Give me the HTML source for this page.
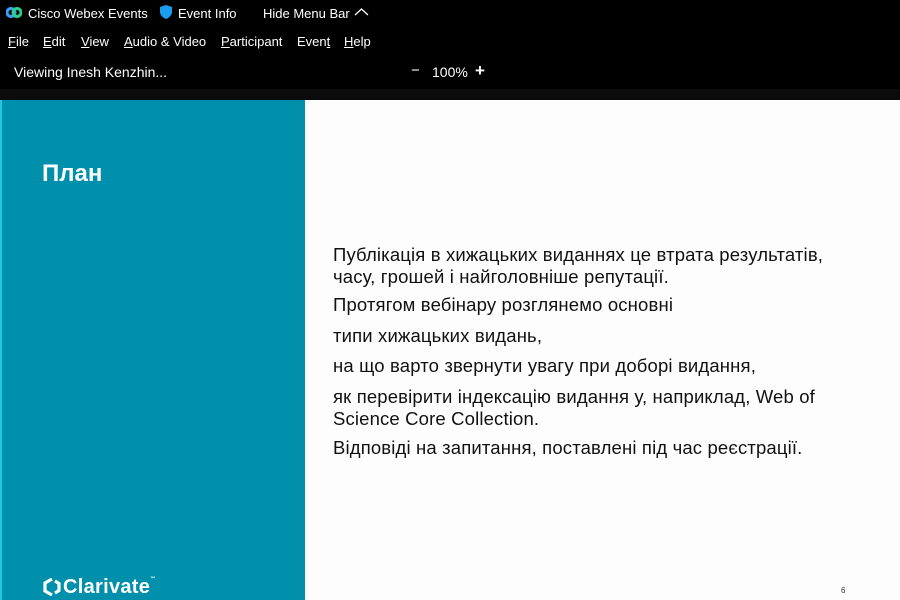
<!DOCTYPE html>
<html><head><meta charset="utf-8"><style>
body{margin:0;width:900px;height:600px;overflow:hidden;background:#000;font-family:"Liberation Sans","DejaVu Sans",sans-serif;position:relative}
.t{position:absolute;color:#fff;font-size:13px;white-space:nowrap}
.m{position:absolute;top:34px;color:#fff;font-size:13px}
.m u{text-decoration:underline}
#left{position:absolute;left:0;top:100px;width:305px;height:500px;background:#0090ab;border-left:2px solid #20c8e0;box-sizing:border-box}
#right{position:absolute;left:305px;top:100px;width:595px;height:500px;background:#fdfdfd}
.p{position:absolute;left:333px;color:#111;font-size:18.5px;line-height:22px;white-space:nowrap;letter-spacing:0.15px}
</style></head><body>
<svg style="position:absolute;left:6px;top:6px" width="16" height="13" viewBox="0 0 16 13"><circle cx="5" cy="6.5" r="4" fill="none" stroke="#3aa0ff" stroke-width="3"/><circle cx="11" cy="6.5" r="4" fill="none" stroke="#2ad08a" stroke-width="3"/></svg>
<div class="t" style="left:28px;top:6px">Cisco Webex Events</div>
<svg style="position:absolute;left:160px;top:5px" width="12" height="14" viewBox="0 0 12 14"><path d="M6 0L12 2V7C12 10 9 13 6 14C3 13 0 10 0 7V2Z" fill="#1a9cf0"/></svg>
<div class="t" style="left:178px;top:6px">Event Info</div>
<div class="t" style="left:263px;top:6px">Hide Menu Bar</div>
<svg style="position:absolute;left:354px;top:7px" width="15" height="10"><path d="M1 8L7.5 2L14 8" stroke="#fff" fill="none" stroke-width="1.3"/></svg>
<div class="m" style="left:8px"><u>F</u>ile</div>
<div class="m" style="left:43px"><u>E</u>dit</div>
<div class="m" style="left:81px"><u>V</u>iew</div>
<div class="m" style="left:124px"><u>A</u>udio &amp; Video</div>
<div class="m" style="left:221px"><u>P</u>articipant</div>
<div class="m" style="left:297px">Even<u>t</u></div>
<div class="m" style="left:344px"><u>H</u>elp</div>
<div class="t" style="left:14px;top:64px;font-size:14px">Viewing Inesh Kenzhin...</div>
<div class="t" style="left:411px;top:62px;font-size:15px">−</div>
<div class="t" style="left:432px;top:64px;font-size:14px">100%</div>
<div class="t" style="left:475px;top:63px;font-size:17px;font-weight:bold;line-height:16px">+</div>
<div style="position:absolute;left:0;top:89px;width:900px;height:11px;background:#0b0b0b"></div>
<div id="left">
<div style="position:absolute;left:40px;top:60px;color:#fff;font-size:24px;font-weight:bold">План</div>
<svg style="position:absolute;left:41px;top:478px" width="18" height="18" viewBox="0 0 18 18"><path d="M9 1L2 5V13L9 17" fill="none" stroke="#fff" stroke-width="3.2"/><path d="M12 3L16 5.5V12.5L12 15" fill="none" stroke="#fff" stroke-width="3.2"/></svg>
<div style="position:absolute;left:61px;top:476px;color:#fff;font-size:20px;font-weight:bold;letter-spacing:0.3px">Clarivate<sup style="font-size:5px;vertical-align:top">™</sup></div>
</div>
<div id="right"><div style="position:absolute;left:536px;top:486px;font-size:8px;color:#333">6</div></div>
<div class="p" style="top:244px">Публікація в хижацьких виданнях це втрата результатів,<br>часу, грошей і найголовніше репутації.</div>
<div class="p" style="top:294px">Протягом вебінару розглянемо основні</div>
<div class="p" style="top:325px">типи хижацьких видань,</div>
<div class="p" style="top:355px">на що варто звернути увагу при доборі видання,</div>
<div class="p" style="top:386px">як перевірити індексацію видання у, наприклад, Web of<br>Science Core Collection.</div>
<div class="p" style="top:437px">Відповіді на запитання, поставлені під час реєстрації.</div>
</body></html>
